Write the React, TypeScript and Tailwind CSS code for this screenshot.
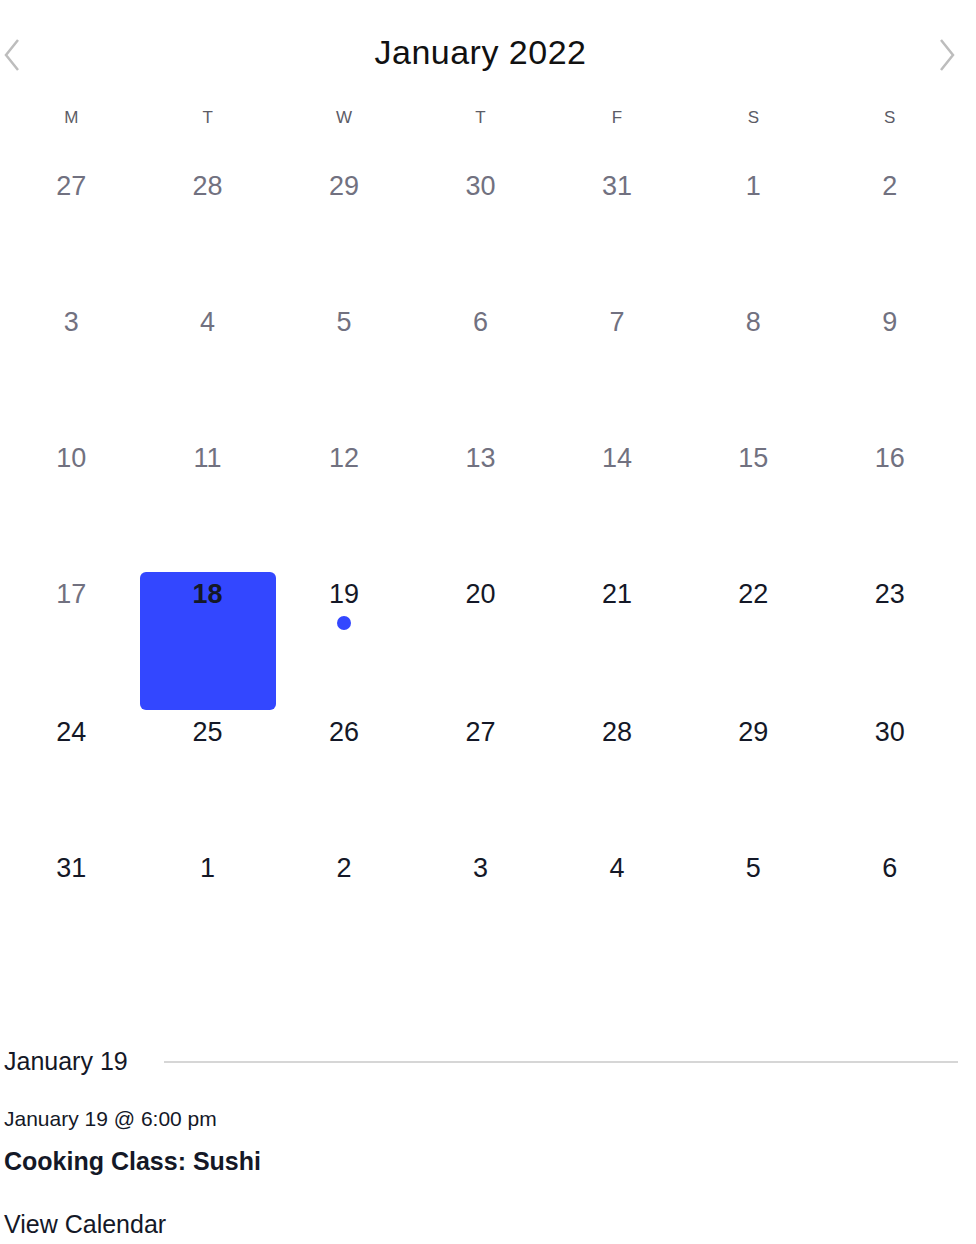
import React from "react";

const weeks: { d: number; past: boolean }[][] = [
  [27, 28, 29, 30, 31, 1, 2],
  [3, 4, 5, 6, 7, 8, 9],
  [10, 11, 12, 13, 14, 15, 16],
  [17, 18, 19, 20, 21, 22, 23],
  [24, 25, 26, 27, 28, 29, 30],
  [31, 1, 2, 3, 4, 5, 6],
].map((w, wi) =>
  w.map((d, di) => ({ d, past: wi < 3 || (wi === 3 && di === 0) }))
);

const dayNames = ["M", "T", "W", "T", "F", "S", "S"];

export default function App() {
  return (
    <div
      className="w-[976px] h-[1244px] bg-white overflow-hidden"
      style={{ fontFamily: '"Liberation Sans", Arial, sans-serif' }}
    >
      <div className="ml-[3px] w-[955px]">
        <div className="flex items-center h-[64px] pt-[20px] box-content">
          <div className="w-[60px] flex justify-start pt-[6px]">
            <svg width="22" height="34" viewBox="0 0 22 34">
              <path d="M15 2 L3 17 L15 32" fill="none" stroke="#bdbdbd" strokeWidth="2.5" />
            </svg>
          </div>
          <div className="flex-1 text-center text-[34px] text-[#111] tracking-[0.5px] leading-none -mt-[1px]">
            January 2022
          </div>
          <div className="w-[60px] flex justify-end pt-[6px]">
            <svg width="22" height="34" viewBox="0 0 22 34">
              <path d="M5 2 L17 17 L5 32" fill="none" stroke="#bdbdbd" strokeWidth="2.5" />
            </svg>
          </div>
        </div>
        <div className="grid grid-cols-7 mt-[23px] h-[20px] items-center">
          {dayNames.map((n, i) => (
            <div key={i} className="text-center text-[17px] text-[#5c5c66] leading-none">
              {n}
            </div>
          ))}
        </div>
        <div className="mt-[37px]">
          {weeks.map((w, wi) => (
            <div key={wi} className={`grid grid-cols-7 ${wi === 3 ? "h-[138px]" : "h-[136px]"}`}>
              {w.map((c, ci) => {
                const selected = wi === 3 && ci === 1;
                const event = wi === 3 && ci === 2;
                return (
                  <div key={ci} className="flex justify-center">
                    <div
                      className={`w-[136px] h-full flex flex-col items-center pt-[8px] ${
                        selected ? "bg-[#3347ff] rounded-[6px]" : ""
                      }`}
                    >
                      <div
                        className={`text-[27px] leading-[28px] ${
                          selected
                            ? "font-bold text-[#141827]"
                            : c.past
                            ? "text-[#717180]"
                            : "text-[#141827]"
                        }`}
                      >
                        {c.d}
                      </div>
                      {event && <div className="w-[14px] h-[14px] rounded-full bg-[#3347ff] mt-[8px]" />}
                    </div>
                  </div>
                );
              })}
            </div>
          ))}
        </div>
        <div className="flex items-center mt-[64px] h-[30px]">
          <div className="text-[25px] text-[#141827] leading-none ml-[1px]">January 19</div>
          <div className="flex-1 h-[2px] bg-[#d6d6d6] ml-[36px] mt-[2px]" />
        </div>
        <div className="mt-[32px] text-[21px] text-[#141827] leading-none ml-[1px]">January 19 @ 6:00 pm</div>
        <div className="mt-[20px] text-[25px] font-bold text-[#141827] leading-none ml-[1px]">
          Cooking Class: Sushi
        </div>
        <div className="mt-[38px] text-[25px] text-[#141827] leading-none ml-[1px]">View Calendar</div>
      </div>
    </div>
  );
}
